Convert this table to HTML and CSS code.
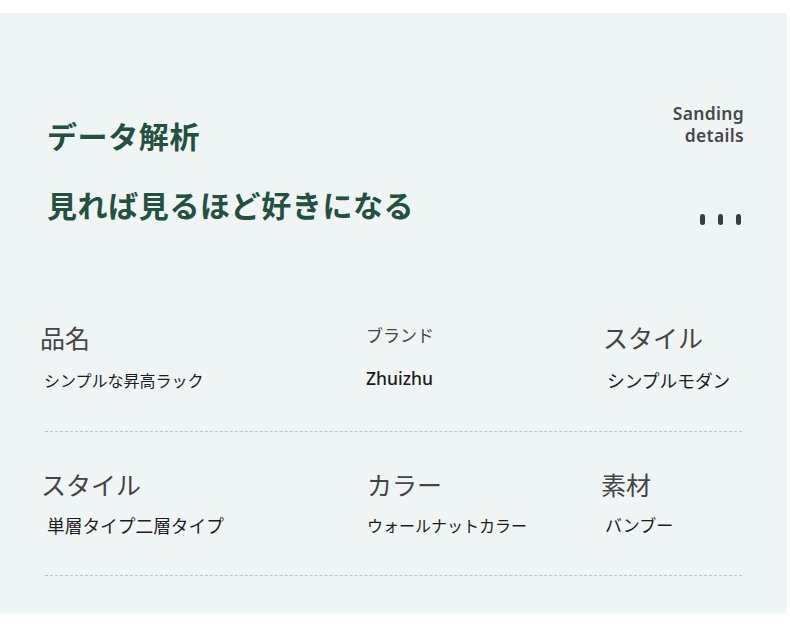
FILE: index.html
```html
<!DOCTYPE html>
<html lang="ja">
<head>
<meta charset="utf-8">
<link rel="stylesheet" href="styles.css">
</head>
<body>
<div class="panel">
  <header class="header">
    <div class="titles">
      <h1 class="title">データ解析</h1>
      <h1 class="title second">見れば見るほど好きになる</h1>
    </div>
    <div class="aside">
      <p class="tag">Sanding<br>details</p>
      <div class="dots"><span></span><span></span><span></span></div>
    </div>
  </header>

  <section class="specs">
    <div class="row first">
      <div class="cell">
        <div class="label">品名</div>
        <div class="value indent">シンプルな昇高ラック</div>
      </div>
      <div class="cell">
        <div class="label small">ブランド</div>
        <div class="value latin">Zhuizhu</div>
      </div>
      <div class="cell">
        <div class="label">スタイル</div>
        <div class="value indent xl">シンプルモダン</div>
      </div>
    </div>
    <div class="rule"></div>
    <div class="row second-row">
      <div class="cell">
        <div class="label nudge">スタイル</div>
        <div class="value indent-lg xl">単層タイプ二層タイプ</div>
      </div>
      <div class="cell">
        <div class="label nudge">カラー</div>
        <div class="value nudge">ウォールナットカラー</div>
      </div>
      <div class="cell shift">
        <div class="label">素材</div>
        <div class="value indent lg">バンブー</div>
      </div>
    </div>
    <div class="rule last"></div>
  </section>
</div>
</body>
</html>
```

FILE: styles.css
```css
* { box-sizing: border-box; }

html, body {
  margin: 0;
  padding: 0;
  background: #ffffff;
}

body {
  font-family: "Noto Sans CJK JP", "Noto Sans", sans-serif;
}

.panel {
  margin-top: 13px;
  width: 787px;
  height: 600px;
  background: #eff4f4;
  overflow: hidden;
}

.header {
  display: flex;
  justify-content: space-between;
  align-items: flex-start;
  padding: 89px 43px 0 47px;
}

.titles {
  margin-top: 13px;
}

.title {
  margin: 0;
  font-size: 30px;
  line-height: 40px;
  font-weight: 700;
  color: #22513f;
  letter-spacing: 0.6px;
}

.title.second {
  margin-top: 29px;
}

.aside {
  display: flex;
  flex-direction: column;
  align-items: flex-end;
}

.tag {
  margin: 0;
  font-family: "Noto Sans", "DejaVu Sans", sans-serif;
  font-weight: 600;
  font-size: 17.5px;
  line-height: 22px;
  letter-spacing: 0.3px;
  color: #444a4a;
  text-align: right;
}

.dots {
  display: flex;
  gap: 13px;
  margin-top: 68px;
  margin-right: 3px;
}

.dots span {
  width: 5px;
  height: 11px;
  border-radius: 3px;
  background: #3a3e3f;
}

.specs {
  margin-top: 97px;
}

.row {
  display: grid;
  grid-template-columns: 326px 237px 1fr;
  padding-left: 40px;
}

.row.second-row {
  margin-top: 37px;
}

.label {
  font-size: 25px;
  line-height: 30px;
  color: #444;
  font-weight: 400;
}

.label.small {
  font-size: 17px;
  margin-top: -2px;
  margin-bottom: 2px;
}

.value {
  margin-top: 16px;
  font-size: 16px;
  line-height: 24px;
  color: #1c1c1c;
  font-weight: 400;
}

.second-row .value {
  margin-top: 14px;
}

.value.lg {
  font-size: 17px;
}

.value.xl {
  font-size: 17.7px;
}

.value.latin {
  font-family: "Noto Sans", "Noto Sans CJK JP", sans-serif;
  font-weight: 500;
  font-size: 17.5px;
}

.indent { padding-left: 4px; }
.indent-lg { padding-left: 7px; }
.nudge { padding-left: 1px; }
.shift { margin-left: -2px; }

.rule {
  margin: 39px 45px 0;
  height: 0;
  border-top: 1px dashed #bcc1c1;
}

.rule.last {
  margin-top: 38px;
}
```
